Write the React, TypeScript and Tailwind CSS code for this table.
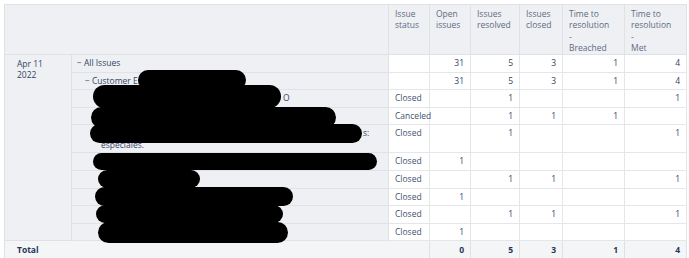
import React from "react";

type Row = {
  label: string;
  depth: number;
  toggle?: boolean;
  status: string;
  open?: number;
  resolved?: number;
  closed?: number;
  breached?: number;
  met?: number;
  tall?: boolean;
  extra?: string;
  shift?: string;
};

const rows: Row[] = [
  { label: "All Issues", depth: 0, toggle: true, status: "", open: 31, resolved: 5, closed: 3, breached: 1, met: 4 },
  { label: "Customer En", depth: 1, toggle: true, status: "", open: 31, resolved: 5, closed: 3, breached: 1, met: 4 },
  { label: "O", depth: 2, status: "Closed", resolved: 1, met: 1, shift: "pl-[182px]" },
  { label: "", depth: 2, status: "Canceled", resolved: 1, closed: 1, breached: 1 },
  { label: "s:", depth: 2, status: "Closed", resolved: 1, met: 1, tall: true, extra: "especiales.", shift: "pl-[262px]" },
  { label: "", depth: 2, status: "Closed", open: 1 },
  { label: "", depth: 2, status: "Closed", resolved: 1, closed: 1, met: 1 },
  { label: "", depth: 2, status: "Closed", open: 1 },
  { label: "", depth: 2, status: "Closed", resolved: 1, closed: 1, met: 1 },
  { label: "", depth: 2, status: "Closed", open: 1 },
];

// redaction marks over the issue names
const blobs = [
  "left-[138px] top-[70px] w-[108px] h-[20px]",
  "left-[93px] top-[85px] w-[188px] h-[23px]",
  "left-[91px] top-[107px] w-[245px] h-[21px]",
  "left-[90px] top-[124px] w-[272px] h-[19px]",
  "left-[93px] top-[153px] w-[284px] h-[17px]",
  "left-[98px] top-[170px] w-[102px] h-[18px]",
  "left-[95px] top-[187px] w-[198px] h-[19px]",
  "left-[96px] top-[205px] w-[187px] h-[18px]",
  "left-[98px] top-[222px] w-[190px] h-[21px]",
];

function Num({ v }: { v?: number }) {
  return <td className="border border-[#e4e6ea] bg-white px-[6px] pt-[2px] text-right align-top text-[#344563]">{v ?? ""}</td>;
}

export default function App() {
  return (
    <div className="relative h-[258px] w-[689px] overflow-hidden bg-white pl-[4px] pt-[4px] font-['Open_Sans',sans-serif] text-[8.5px] leading-[11.3px] text-[#42526e]">
      <table className="w-[682px] table-fixed border-collapse border border-[#dfe1e6]">
        <colgroup>
          <col className="w-[67px]" />
          <col className="w-[317px]" />
          <col className="w-[41px]" />
          <col className="w-[41px]" />
          <col className="w-[49px]" />
          <col className="w-[43px]" />
          <col className="w-[62px]" />
          <col className="w-[62px]" />
        </colgroup>
        <thead>
          <tr className="h-[50px] bg-[#eef0f3] text-[#5e6c84]">
            <th colSpan={2} className="border border-[#dfe1e6]" />
            <th className="border border-[#dfe1e6] px-[6px] pt-[3px] text-left align-top font-normal">Issue<br />status</th>
            <th className="border border-[#dfe1e6] px-[6px] pt-[3px] text-left align-top font-normal">Open<br />issues</th>
            <th className="border border-[#dfe1e6] px-[6px] pt-[3px] text-left align-top font-normal">Issues<br />resolved</th>
            <th className="border border-[#dfe1e6] px-[6px] pt-[3px] text-left align-top font-normal">Issues<br />closed</th>
            <th className="border border-[#dfe1e6] px-[6px] pt-[3px] text-left align-top font-normal">Time to<br />resolution<br />-<br />Breached</th>
            <th className="border border-[#dfe1e6] px-[6px] pt-[3px] text-left align-top font-normal">Time to<br />resolution<br />-<br />Met</th>
          </tr>
        </thead>
        <tbody>
          {rows.map((r, i) => (
            <tr key={i} className={r.tall ? "h-[28px]" : "h-[17.6px]"}>
              {i === 0 && (
                <td rowSpan={rows.length} className="border border-[#dfe1e6] bg-[#eef0f3] px-[12px] pt-[3px] align-top text-[#344563]">
                  Apr 11<br />2022
                </td>
              )}
              <td className="border border-[#dfe3e8] bg-[#eef0f3] pt-[2px] align-top text-[#344563]">
                {r.depth === 0 && <div className="pl-[5px]"><span className="mr-[2px]">−</span>{r.label}</div>}
                {r.depth === 1 && <div className="pl-[13px]"><span className="mr-[2px]">−</span>{r.label}</div>}
                {r.depth === 2 && (
                  <div className="pl-[29px]">
                    <div className={r.shift ?? ""}>{r.label || "\u00a0"}</div>
                    {r.extra && <div>{r.extra}</div>}
                  </div>
                )}
              </td>
              <td className="border border-[#e4e6ea] bg-white px-[6px] pt-[2px] align-top">{r.status}</td>
              <Num v={r.open} />
              <Num v={r.resolved} />
              <Num v={r.closed} />
              <Num v={r.breached} />
              <Num v={r.met} />
            </tr>
          ))}
          <tr className="h-[18px] bg-[#f4f5f7] font-bold text-[#253858]">
            <td colSpan={3} className="border border-[#dfe1e6] px-[12px]">Total</td>
            <td className="border border-[#dfe1e6] px-[6px] text-right">0</td>
            <td className="border border-[#dfe1e6] px-[6px] text-right">5</td>
            <td className="border border-[#dfe1e6] px-[6px] text-right">3</td>
            <td className="border border-[#dfe1e6] px-[6px] text-right">1</td>
            <td className="border border-[#dfe1e6] px-[6px] text-right">4</td>
          </tr>
        </tbody>
      </table>
      {blobs.map((b, i) => (
        <div key={i} className={`absolute rounded-full bg-black ${b}`} />
      ))}
    </div>
  );
}
